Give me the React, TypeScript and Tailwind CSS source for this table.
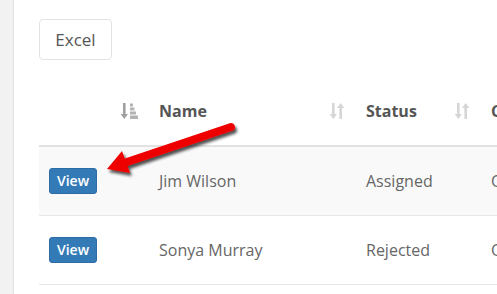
import React from "react";

type Row = {
  name: string;
  status: string;
  other: string;
};

const rows: Row[] = [
  { name: "Jim Wilson", status: "Assigned", other: "Open" },
  { name: "Sonya Murray", status: "Rejected", other: "Open" },
];

// sorted column icon (arrow + stacked bars)
const SortActive = () => (
  <svg width="18" height="16" viewBox="0 0 18 16" className="text-[#a0a0a0]">
    <path d="M3 0h2.6v11H8L4.3 16 0.6 11H3z" fill="currentColor" />
    <rect x="10" y="0.5" width="3" height="3" fill="currentColor" opacity="0.8" />
    <rect x="10" y="4.5" width="4.5" height="3" fill="currentColor" opacity="0.8" />
    <rect x="10" y="8.5" width="6" height="3" fill="currentColor" opacity="0.8" />
    <rect x="10" y="12.5" width="8" height="3.5" fill="currentColor" opacity="0.8" />
  </svg>
);

// unsorted column icon (down + up arrows)
const SortBoth = () => (
  <svg width="16" height="16" viewBox="0 0 16 16" className="text-[#d6d6d6]">
    <path d="M3 0h2.6v11H8L4.3 16 0.6 11H3z" fill="currentColor" />
    <path d="M10.4 16h2.6V5h2.4L11.7 0 8 5h2.4z" fill="currentColor" />
  </svg>
);

const Arrow = () => (
  <svg
    width="497"
    height="294"
    viewBox="0 0 497 294"
    className="absolute left-0 top-0 pointer-events-none"
  >
    <defs>
      <filter id="shadow" x="-20%" y="-40%" width="140%" height="180%">
        <feGaussianBlur in="SourceAlpha" stdDeviation="1.6" />
        <feOffset dx="2" dy="3" result="blur" />
        <feComponentTransfer>
          <feFuncA type="linear" slope="0.7" />
        </feComponentTransfer>
        <feMerge>
          <feMergeNode />
          <feMergeNode in="SourceGraphic" />
        </feMerge>
      </filter>
    </defs>
    <g filter="url(#shadow)">
      <line
        x1="231"
        y1="127"
        x2="124"
        y2="163"
        stroke="#ee0000"
        strokeWidth="8"
        strokeLinecap="round"
      />
      <polygon points="107,169 122,151 130,173" fill="#ee0000" />
    </g>
  </svg>
);

export default function App() {
  return (
    <div className="relative w-[497px] h-[294px] overflow-hidden bg-white flex font-['Open_Sans',sans-serif]">
      <div className="w-[14px] shrink-0 bg-[#f2f2f2] border-r border-[#e2e2e2]" />
      <div className="flex-1 pl-[25px] pt-[19px] min-w-0">
        <button className="h-[41px] w-[73px] border border-[#e3e3e3] rounded-[4px] text-[17px] text-[#555] bg-white">
          Excel
        </button>

        <div className="mt-[17px] w-[700px]">
          {/* header */}
          <div className="flex h-[70px] border-b-2 border-[#e2e2e2] text-[16px] font-bold text-[#555]">
            <div className="w-[110px] pl-[10px] pr-[11px] flex items-center justify-end">
              <SortActive />
            </div>
            <div className="w-[207px] pl-[10px] pr-[11px] flex items-center justify-between">
              <span>Name</span>
              <SortBoth />
            </div>
            <div className="w-[125px] pl-[10px] pr-[11px] flex items-center justify-between">
              <span>Status</span>
              <SortBoth />
            </div>
            <div className="w-[200px] pl-[10px] flex items-center">
              <span>Category</span>
            </div>
          </div>

          {/* body */}
          {rows.map((row, i) => (
            <div
              key={row.name}
              className={`flex h-[69px] border-b border-[#e6e6e6] text-[16px] text-[#666] ${
                i % 2 === 0 ? "bg-[#f9f9f9]" : "bg-white"
              }`}
            >
              <div className="w-[110px] pl-[10px] flex items-center">
                <button className="h-[26px] w-[48px] rounded-[3px] bg-[#337ab7] border border-[#2e6da4] text-white text-[14px] font-semibold leading-none">
                  View
                </button>
              </div>
              <div className="w-[207px] pl-[10px] flex items-center">{row.name}</div>
              <div className="w-[125px] pl-[10px] flex items-center">{row.status}</div>
              <div className="w-[200px] pl-[10px] flex items-center">{row.other}</div>
            </div>
          ))}
        </div>
      </div>
      <Arrow />
    </div>
  );
}
